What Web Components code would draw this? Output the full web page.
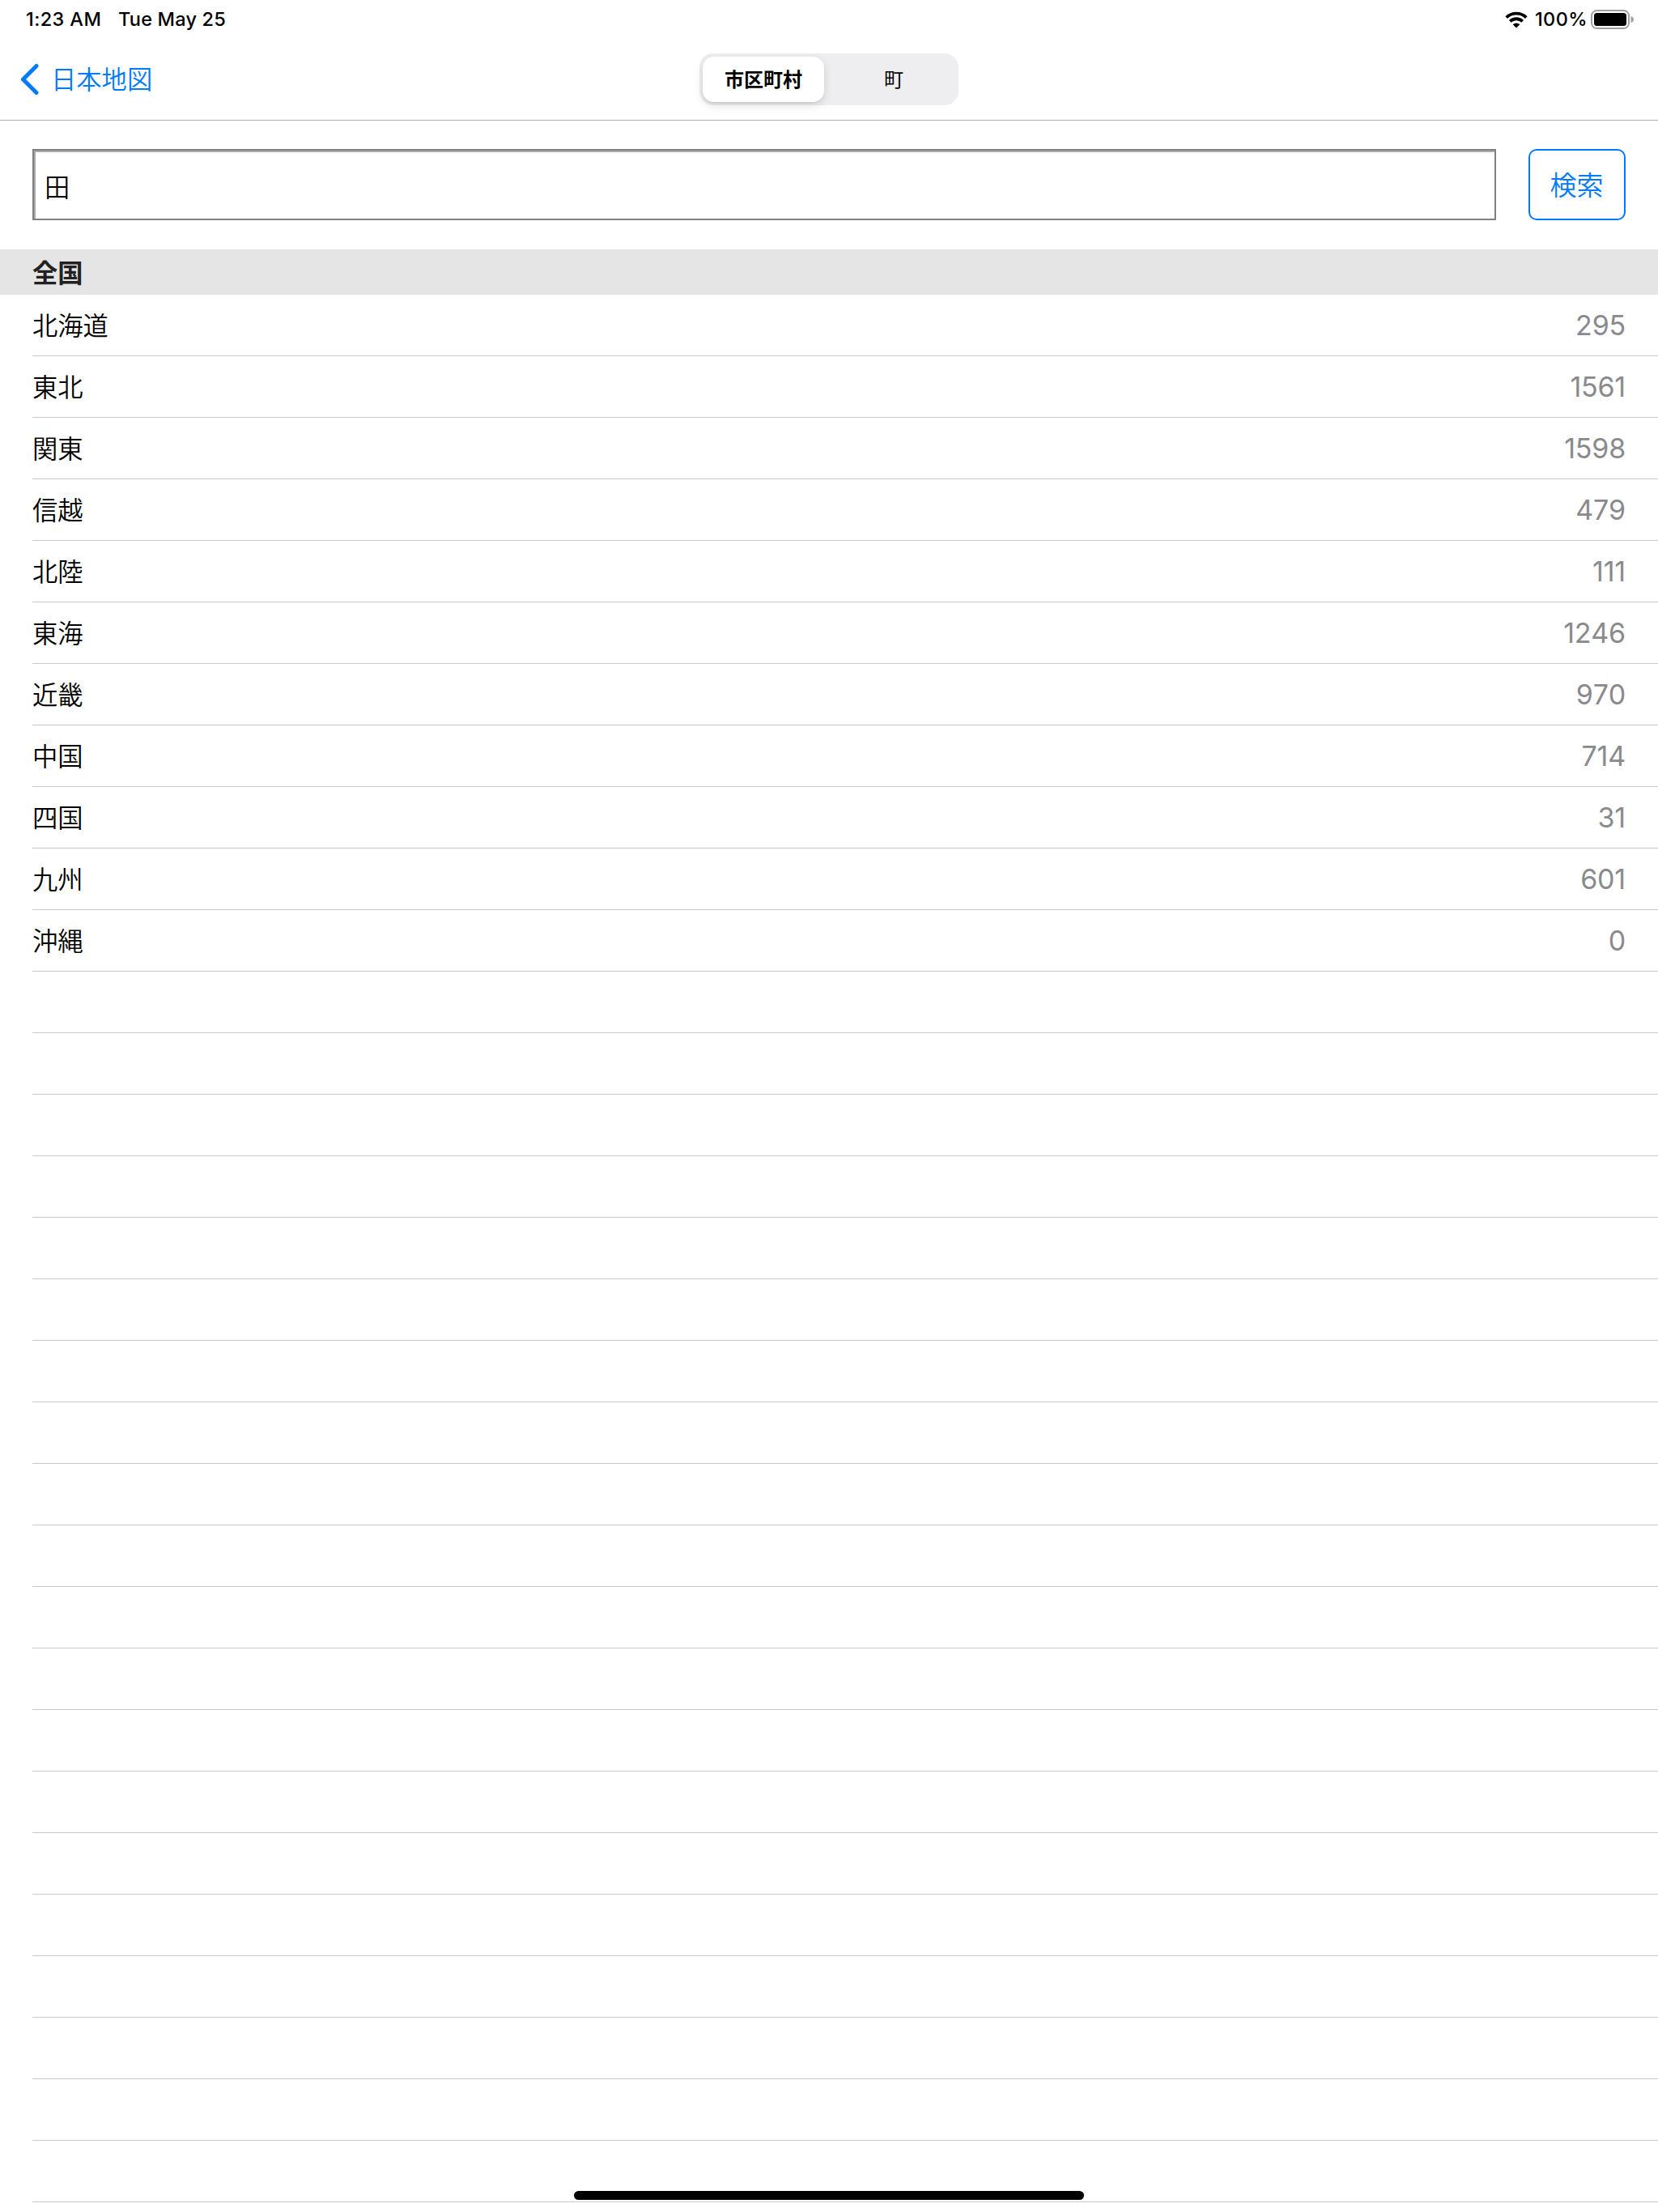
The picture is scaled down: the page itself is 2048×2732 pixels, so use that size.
<!DOCTYPE html>
<html lang="ja">
<head>
<meta charset="utf-8">
<title>市区町村</title>
<style>
  body {
    margin: 0;
    background: #fff;
    color: #000;
    font-family: Inter, "Noto Sans CJK JP", sans-serif;
    --light: Inter, "Noto Sans CJK JP DemiLight", "Noto Sans CJK JP", sans-serif;
  }
</style>
</head>
<body>
<search-screen></search-screen>

<script>
customElements.define(
  "status-bar",
  class extends HTMLElement {
    constructor() {
      super().attachShadow({ mode: "open" });
    }

    connectedCallback() {
      this.shadowRoot.innerHTML = /*html*/ `
        <style>
          :host {
            display: flex;
            align-items: center;
            height: 48px;
            padding: 0 30px 0 32px;
            font-size: 23.5px;
            font-weight: 500;
            line-height: 48px;
          }

          .time { width: 114px; letter-spacing: .4px; }
          .date { flex: 1; letter-spacing: .2px; }
          .wifi { width: 28px; height: 21px; }
          .level { width: 78px; text-align: right; letter-spacing: .4px; box-sizing: border-box; padding-right: 4px; }
          .battery { width: 53px; height: 24px; }
        </style>
        <span class="time">${this.getAttribute("time")}</span>
        <span class="date">${this.getAttribute("date")}</span>
        <svg class="wifi" viewBox="0 0 28 21">
          <g fill="none" stroke="#000" stroke-width="3.8">
            <path d="M1.7 7.6a17.6 17.6 0 0 1 24.6 0"/>
            <path d="M6.3 12.4a11 11 0 0 1 15.4 0"/>
          </g>
          <path d="M14 20.5l-4.3-4.3a6.2 6.2 0 0 1 8.6 0z"/>
        </svg>
        <span class="level">${this.getAttribute("battery")}</span>
        <svg class="battery" viewBox="0 0 53 24">
          <rect x="1" y="1" width="46" height="22" rx="6.5" fill="none" stroke="#a0a0a0" stroke-width="2"/>
          <rect x="4" y="4" width="40" height="16" rx="3.5"/>
          <path d="M49.5 8q3.5 1 3.5 4t-3.5 4z" fill="#a0a0a0"/>
        </svg>
      `;
    }
  }
);

customElements.define(
  "back-button",
  class extends HTMLElement {
    constructor() {
      super().attachShadow({ mode: "open" });
    }

    connectedCallback() {
      this.shadowRoot.innerHTML = /*html*/ `
        <style>
          :host {
            display: flex;
            align-items: center;
            gap: 15px;
            color: #007aff;
            font-family: var(--light);
            font-size: 31.3px;
            font-weight: 300;
            line-height: 44px;
            cursor: pointer;
          }

          svg { width: 24px; height: 40px; }
          span { padding-top: 2px; }
        </style>
        <svg viewBox="0 0 24 40">
          <path d="M21 3.5L4.5 20L21 36.5" fill="none" stroke="currentColor" stroke-width="5" stroke-linecap="round" stroke-linejoin="round"/>
        </svg>
        <span><slot></slot></span>
      `;
    }
  }
);

customElements.define(
  "segmented-control",
  class extends HTMLElement {
    constructor() {
      super().attachShadow({ mode: "open" });
    }

    connectedCallback() {
      this.shadowRoot.innerHTML = /*html*/ `
        <style>
          :host {
            display: grid;
            grid-template-columns: 150px 1fr;
            gap: 10px;
            box-sizing: border-box;
            width: 320px;
            height: 64px;
            padding: 4px;
            border-radius: 17px;
            background: #eeeef0;
            font-size: 24px;
            font-weight: 400;
            line-height: 57px;
            text-align: center;
          }

          ::slotted(*) { height: 56px; border-radius: 14px; cursor: pointer; }

          ::slotted([aria-selected="true"]) {
            background: #fff;
            box-shadow: 0 4px 12px rgb(0 0 0 / .12), 0 2px 2px rgb(0 0 0 / .05);
            font-weight: 700;
          }
        </style>
        <slot></slot>
      `;
      this.addEventListener("click", this);
    }

    handleEvent(event) {
      if (event.target === this) return;

      for (const item of this.children) {
        item.setAttribute("aria-selected", item === event.target);
      }
    }
  }
);

customElements.define(
  "nav-bar",
  class extends HTMLElement {
    constructor() {
      super().attachShadow({ mode: "open" });
    }

    connectedCallback() {
      this.shadowRoot.innerHTML = /*html*/ `
        <style>
          :host {
            display: grid;
            grid-template-columns: 1fr auto 1fr;
            align-items: center;
            box-sizing: border-box;
            height: 101px;
            padding: 0 24px;
            border-bottom: 1px solid #b2b2b2;
          }
        </style>
        <slot name="left"></slot>
        <slot></slot>
      `;
    }
  }
);

customElements.define(
  "search-form",
  class extends HTMLElement {
    constructor() {
      super().attachShadow({ mode: "open" });
    }

    connectedCallback() {
      this.shadowRoot.innerHTML = /*html*/ `
        <style>
          :host {
            display: flex;
            gap: 40px;
            padding: 35px 40px 36px;
          }

          .field, .button {
            box-sizing: border-box;
            height: 88px;
            font-family: var(--light);
            font-weight: 300;
          }

          .field {
            flex: 1;
            padding: 4px 0 0 13px;
            border: 2px solid #808080;
            box-shadow: inset 2px 2px #aaa;
            font-size: 31.3px;
            line-height: 84px;
          }

          .button {
            width: 120px;
            padding-right: 1px;
            border: 2px solid #007aff;
            border-radius: 10px;
            color: #007aff;
            font-size: 33px;
            line-height: 86px;
            text-align: center;
            cursor: pointer;
          }
        </style>
        <div class="field">${this.getAttribute("value")}</div>
        <div class="button" role="button"><slot></slot></div>
      `;
    }
  }
);

customElements.define(
  "list-row",
  class extends HTMLElement {
    constructor() {
      super().attachShadow({ mode: "open" });
    }

    connectedCallback() {
      this.shadowRoot.innerHTML = /*html*/ `
        <style>
          :host {
            display: flex;
            justify-content: space-between;
            box-sizing: border-box;
            height: 76px;
            margin-left: 40px;
            padding-right: 40px;
            border-bottom: 1px solid #c8c8c8;
            font-family: var(--light);
            font-size: 31.3px;
            font-weight: 300;
            line-height: 79px;
          }

          .count {
            color: #8a8a8e;
            font-size: 34px;
            font-weight: 400;
            font-kerning: none;
            letter-spacing: -.2px;
            line-height: 76px;
          }
        </style>
        <slot></slot>
        <span class="count">${this.getAttribute("count") ?? ""}</span>
      `;
    }
  }
);

customElements.define(
  "list-section",
  class extends HTMLElement {
    constructor() {
      super().attachShadow({ mode: "open" });
    }

    connectedCallback() {
      this.shadowRoot.innerHTML = /*html*/ `
        <style>
          :host { display: block; }

          header {
            height: 56px;
            padding-left: 40px;
            background: #e5e5e5;
            color: #222;
            font-size: 31.3px;
            font-weight: 700;
            line-height: 60px;
          }
        </style>
        <header>${this.getAttribute("heading")}</header>
        <slot></slot>
      `;
    }
  }
);

customElements.define(
  "home-indicator",
  class extends HTMLElement {
    constructor() {
      super().attachShadow({ mode: "open" });
    }

    connectedCallback() {
      this.shadowRoot.innerHTML = /*html*/ `
        <style>
          /* floats over the last row of the list */
          :host {
            position: absolute;
            bottom: 15px;
            left: 50%;
            width: 630px;
            height: 11px;
            margin-left: -315px;
            border-radius: 6px;
            background: #000;
          }
        </style>
      `;
    }
  }
);

const regions = [
  ["北海道", 295],
  ["東北", 1561],
  ["関東", 1598],
  ["信越", 479],
  ["北陸", 111],
  ["東海", 1246],
  ["近畿", 970],
  ["中国", 714],
  ["四国", 31],
  ["九州", 601],
  ["沖縄", 0],
];
const EMPTY_ROWS = 20;

customElements.define(
  "search-screen",
  class extends HTMLElement {
    constructor() {
      super().attachShadow({ mode: "open" });
    }

    connectedCallback() {
      const rows = regions.map(([name, count]) => `<list-row count="${count}">${name}</list-row>`).join("");

      this.shadowRoot.innerHTML = /*html*/ `
        <style>
          :host {
            display: block;
            position: relative;
            width: 2048px;
            height: 2732px;
            overflow: hidden;
          }
        </style>
        <status-bar time="1:23 AM" date="Tue May 25" battery="100%"></status-bar>
        <nav-bar>
          <back-button slot="left">日本地図</back-button>
          <segmented-control>
            <span aria-selected="true">市区町村</span>
            <span aria-selected="false">町</span>
          </segmented-control>
        </nav-bar>
        <search-form value="田">検索</search-form>
        <list-section heading="全国">
          ${rows}
          ${"<list-row></list-row>".repeat(EMPTY_ROWS)}
        </list-section>
        <home-indicator></home-indicator>
      `;
    }
  }
);
</script>
</body>
</html>
